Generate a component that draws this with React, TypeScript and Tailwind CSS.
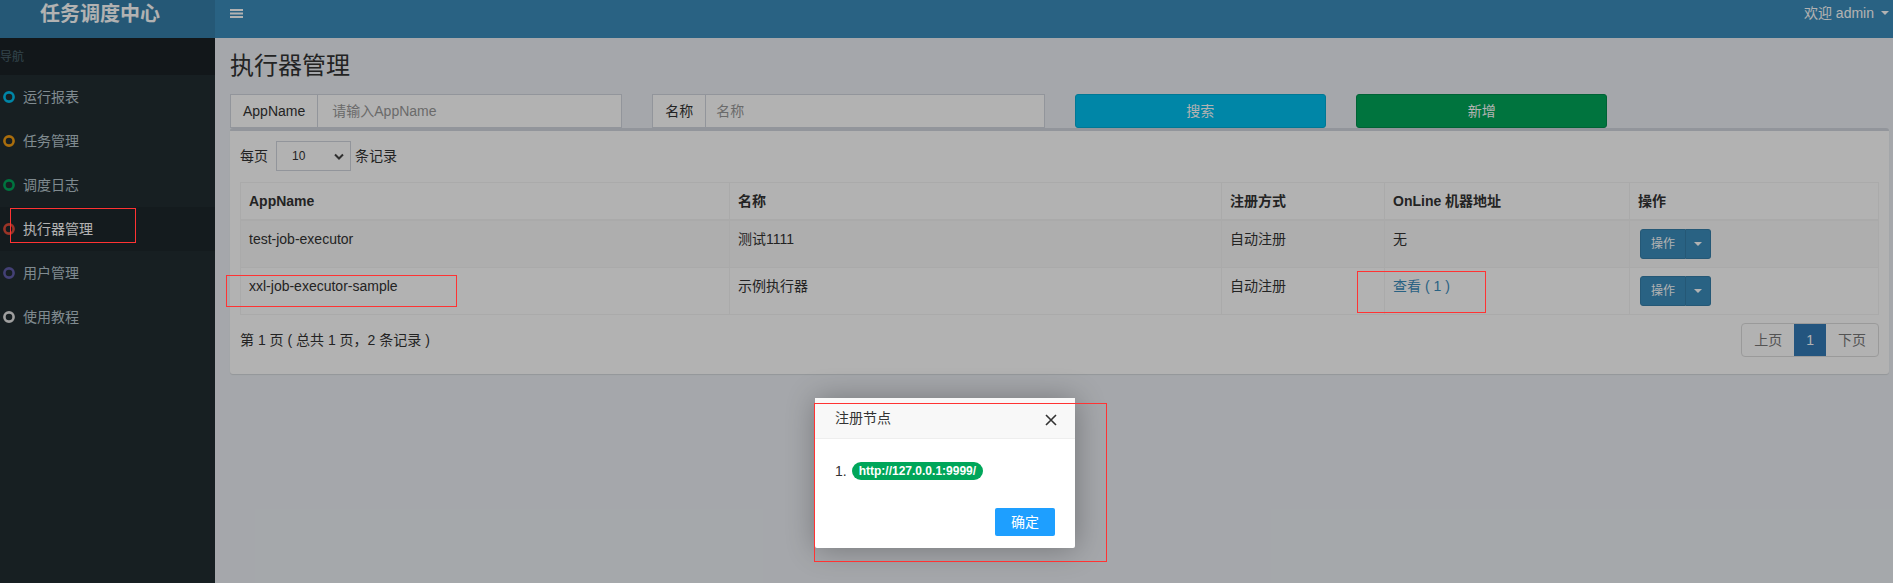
import React from 'react';

const menu = [
  { label: '运行报表', color: '#00c0ef' },
  { label: '任务管理', color: '#f39c12' },
  { label: '调度日志', color: '#00a65a' },
  { label: '执行器管理', color: '#dd4b39', active: true },
  { label: '用户管理', color: '#605ca8' },
  { label: '使用教程', color: '#e4e4e4' },
];

const rows = [
  { app: 'test-job-executor', name: '测试1111', type: '自动注册', online: null },
  { app: 'xxl-job-executor-sample', name: '示例执行器', type: '自动注册', online: 1 },
];

function Caret() {
  return <span className="inline-block w-0 h-0 border-x-[4px] border-t-[4px] border-x-transparent border-t-white" />;
}

function ActionButton() {
  return (
    <div className="inline-flex h-[30px] text-[12px] text-white">
      <span className="flex items-center px-[10px] bg-[#3c8dbc] border border-[#367fa9] rounded-l-[3px]">操作</span>
      <span className="flex items-center px-[8px] bg-[#3c8dbc] border border-l-0 border-[#367fa9] rounded-r-[3px]">
        <Caret />
      </span>
    </div>
  );
}

export default function App() {
  return (
    <div className="relative w-[1893px] h-[583px] overflow-hidden bg-[#ecf0f5] text-[14px] text-[#333] font-['Liberation_Sans','Noto_Sans_CJK_SC',sans-serif]">
      <div className="flex h-full">
        {/* Sidebar */}
        <aside className="w-[215px] shrink-0 bg-[#222d32] flex flex-col">
          <div className="h-[38px] bg-[#367fa9] pl-[40px] text-white text-[20px] font-bold leading-[28px]">
            任务调度中心
          </div>
          <div className="h-[37px] bg-[#1a2226] flex items-center text-[12px] text-[#4b646f]">导航</div>
          <ul>
            {menu.map((m) => (
              <li
                key={m.label}
                className={`h-[44px] flex items-center pl-[3px] gap-[8px] ${m.active ? 'bg-[#1e282c] text-white' : 'text-[#b8c7ce]'}`}
              >
                <svg width="12" height="12" viewBox="0 0 12 12">
                  <circle cx="6" cy="6" r="4.6" fill="none" stroke={m.color} strokeWidth="2.6" />
                </svg>
                <span>{m.label}</span>
              </li>
            ))}
          </ul>
        </aside>

        {/* Main */}
        <div className="flex-1 flex flex-col">
          <header className="h-[38px] shrink-0 bg-[#3c8dbc] flex items-start justify-between text-white">
            <svg className="ml-[15px] mt-[9px]" width="13" height="9" viewBox="0 0 13 9">
              <rect x="0" y="0" width="13" height="2" fill="#fff" />
              <rect x="0" y="3.5" width="13" height="2" fill="#fff" />
              <rect x="0" y="7" width="13" height="2" fill="#fff" />
            </svg>
            <div className="flex items-center gap-[7px] pr-[4px] h-[26px]">
              <span>欢迎 admin</span>
              <Caret />
            </div>
          </header>

          <main className="flex-1 pl-[15px] pr-[4px]">
            <div className="h-[56px] flex items-center">
              <h1 className="text-[24px] leading-[26px]">执行器管理</h1>
            </div>

            {/* Filters */}
            <div className="flex -mx-[15px]">
              <div className="w-3/12 px-[15px]">
                <div className="flex h-[34px] bg-white border border-[#d2d6de]">
                  <span className="flex items-center px-[12px] border-r border-[#d2d6de]">AppName</span>
                  <span className="flex items-center px-[14px] text-[#999]">请输入AppName</span>
                </div>
              </div>
              <div className="w-3/12 px-[15px]">
                <div className="flex h-[34px] bg-white border border-[#d2d6de]">
                  <span className="flex items-center px-[12px] border-r border-[#d2d6de]">名称</span>
                  <span className="flex items-center px-[10px] text-[#999]">名称</span>
                </div>
              </div>
              <div className="w-2/12 px-[15px]">
                <div className="h-[34px] flex items-center justify-center rounded-[3px] bg-[#00c0ef] border border-[#00acd6] text-white">搜索</div>
              </div>
              <div className="w-2/12 px-[15px]">
                <div className="h-[34px] flex items-center justify-center rounded-[3px] bg-[#00a65a] border border-[#008d4c] text-white">新增</div>
              </div>
            </div>

            {/* Box */}
            <div className="bg-white border-t-[3px] border-[#d2d6de] rounded-[3px] shadow-[0_1px_1px_rgba(0,0,0,0.1)] p-[10px]">
              <div className="flex items-center h-[30px]">
                <span>每页</span>
                <div className="ml-[8px] w-[75px] h-[30px] border border-[#d2d6de] flex items-center justify-between pl-[15px] pr-[6px] text-[12px]">
                  <span>10</span>
                  <svg width="10" height="7" viewBox="0 0 10 7">
                    <path d="M1 1.5 L5 5.5 L9 1.5" fill="none" stroke="#444" strokeWidth="2" />
                  </svg>
                </div>
                <span className="ml-[4px]">条记录</span>
              </div>

              <table className="mt-[11px] w-[1638px] table-fixed border-collapse border border-[#f4f4f4]">
                <colgroup>
                  <col className="w-[489px]" />
                  <col className="w-[492px]" />
                  <col className="w-[163px]" />
                  <col className="w-[245px]" />
                  <col className="w-[249px]" />
                </colgroup>
                <thead>
                  <tr>
                    {['AppName', '名称', '注册方式', 'OnLine 机器地址', '操作'].map((h) => (
                      <th key={h} className="text-left font-bold px-[8px] py-[8px] leading-[20px] border border-b-2 border-[#f4f4f4]">
                        {h}
                      </th>
                    ))}
                  </tr>
                </thead>
                <tbody>
                  {rows.map((r, i) => (
                    <tr key={r.app} className={i === 0 ? 'bg-[#f9f9f9]' : ''}>
                      <td className="align-top px-[8px] py-[8px] leading-[20px] border border-[#f4f4f4]">{r.app}</td>
                      <td className="align-top px-[8px] py-[8px] leading-[20px] border border-[#f4f4f4]">{r.name}</td>
                      <td className="align-top px-[8px] py-[8px] leading-[20px] border border-[#f4f4f4]">{r.type}</td>
                      <td className="align-top px-[8px] py-[8px] leading-[20px] border border-[#f4f4f4]">
                        {r.online ? <span className="text-[#3c8dbc]">查看 ( {r.online} )</span> : '无'}
                      </td>
                      <td className="align-top pl-[10px] pr-[8px] py-[8px] leading-[20px] border border-[#f4f4f4]">
                        <ActionButton />
                      </td>
                    </tr>
                  ))}
                </tbody>
              </table>

              <div className="flex items-center justify-between mt-[8px] pb-[7px]">
                <span>第 1 页 ( 总共 1 页，2 条记录 )</span>
                <div className="flex h-[34px] border border-[#ddd] rounded-[4px] overflow-hidden">
                  <span className="flex items-center px-[12px] text-[#777]">上页</span>
                  <span className="flex items-center px-[12px] bg-[#337ab7] text-white">1</span>
                  <span className="flex items-center px-[12px] text-[#777]">下页</span>
                </div>
              </div>
            </div>
          </main>
        </div>
      </div>

      {/* Modal backdrop with the dialog inside */}
      <div className="absolute inset-0 bg-[rgba(0,0,0,0.3)]">
        <div className="absolute left-[815px] top-[398px] w-[260px] bg-white rounded-[2px] shadow-[1px_1px_30px_rgba(0,0,0,0.3)]">
          <div className="relative h-[41px] bg-[#f8f8f8] border-b border-[#eee] pl-[20px] leading-[41px] text-[#333]">
            注册节点
            <svg className="absolute right-[18px] top-[16px]" width="12" height="12" viewBox="0 0 12 12">
              <path d="M1 1 L11 11 M11 1 L1 11" stroke="#333" strokeWidth="1.6" />
            </svg>
          </div>
          <div className="px-[20px] pt-[20px] pb-[20px] leading-[24px] flex items-center">
            <span>1.</span>
            <span className="ml-[5px] h-[18px] leading-[18px] px-[7px] rounded-full bg-[#00a65a] text-white text-[12px] font-bold">
              http://127.0.0.1:9999/
            </span>
          </div>
          <div className="flex justify-end px-[20px] pt-[5px] pb-[12px]">
            <span className="h-[28px] leading-[28px] px-[16px] rounded-[2px] bg-[#1e9fff] text-white">确定</span>
          </div>
        </div>
      </div>

      {/* Annotation boxes */}
      <div className="absolute left-[10px] top-[208px] w-[126px] h-[35px] border border-[#ff3333]" />
      <div className="absolute left-[226px] top-[275px] w-[231px] h-[32px] border border-[#ff3333]" />
      <div className="absolute left-[1357px] top-[271px] w-[129px] h-[42px] border border-[#ff3333]" />
      <div className="absolute left-[814px] top-[403px] w-[293px] h-[159px] border border-[#ff3333]" />
    </div>
  );
}
